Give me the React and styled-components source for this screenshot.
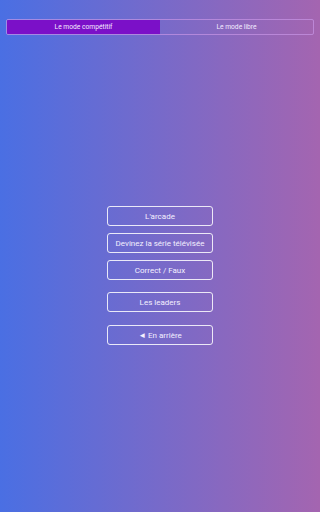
import React from 'react';
import styled, { createGlobalStyle } from 'styled-components';

const GlobalStyle = createGlobalStyle`
  html, body {
    margin: 0;
    padding: 0;
  }
  body {
    font-family: Roboto, "Liberation Sans", sans-serif;
  }
`;

const Page = styled.div`
  width: 320px;
  height: 512px;
  background: linear-gradient(90deg, #4a6fe3 0%, #a465b0 100%);
  display: flex;
  flex-direction: column;
  align-items: center;
  padding-top: 19px;
  box-sizing: border-box;
`;

const Tabs = styled.div`
  width: 308px;
  height: 16px;
  display: flex;
  border: 1px solid rgba(200, 150, 230, 0.7);
  border-radius: 2px;
  box-sizing: border-box;
  overflow: hidden;
`;

const Tab = styled.div`
  flex: 1;
  display: flex;
  align-items: center;
  justify-content: center;
  font-size: 6.7px;
  font-weight: 400;
  color: #f3eaff;
  background: ${props => (props.active ? '#7b10c8' : 'transparent')};
`;

const Menu = styled.div`
  margin-top: 171px;
  display: flex;
  flex-direction: column;
  align-items: center;
`;

const MenuButton = styled.button`
  width: 106px;
  height: 20px;
  margin-top: ${props => props.gap || 0}px;
  background: transparent;
  border: 1.3px solid rgba(255, 255, 255, 0.85);
  border-radius: 3px;
  color: #f4f0ff;
  font-family: Roboto, "Liberation Sans", sans-serif;
  font-size: 8px;
  font-weight: 400;
  padding: 0;
  box-sizing: border-box;
  cursor: pointer;
`;

const items = [
  { label: "L'arcade", gap: 0 },
  { label: 'Devinez la série télévisée', gap: 7 },
  { label: 'Correct / Faux', gap: 7 },
  { label: 'Les leaders', gap: 12 },
  { label: '◄ En arrière', gap: 13 },
];

export default function App() {
  return (
    <>
      <GlobalStyle />
      <Page>
        <Tabs>
          <Tab active>Le mode compétitif</Tab>
          <Tab>Le mode libre</Tab>
        </Tabs>
        <Menu>
          {items.map(item => (
            <MenuButton key={item.label} gap={item.gap}>
              {item.label}
            </MenuButton>
          ))}
        </Menu>
      </Page>
    </>
  );
}
